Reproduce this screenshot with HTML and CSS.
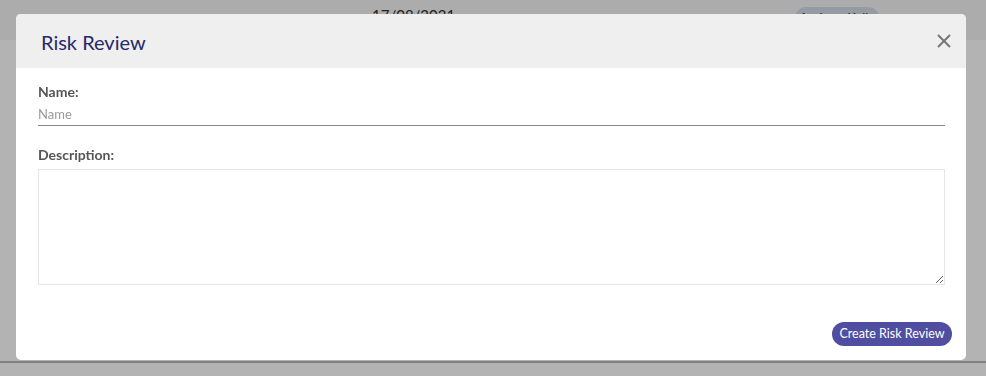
FILE: index.html
```html
<!DOCTYPE html>
<html lang="en">

<head>
    <meta charset="UTF-8">
    <meta name="viewport" content="width=device-width, initial-scale=1.0">
    <title>Risk Review</title>
    <link rel="stylesheet" href="styles.css">
</head>

<body>

    <div class="page">
        <div class="page-header">
            <span class="page-date">17/08/2021</span>
            <span class="user-pill">Andrew Kelly</span>
        </div>
        <div class="page-content"></div>
        <div class="page-footer"></div>
    </div>

    <div class="overlay">
        <div class="modal">
            <div class="modal-header">
                <h2 class="modal-title">Risk Review</h2>
                <span class="close-button">
                    <svg width="14" height="14" viewBox="0 0 14 14">
                        <path d="M1 1 L13 13 M13 1 L1 13" stroke="#777" stroke-width="2" fill="none" />
                    </svg>
                </span>
            </div>
            <div class="modal-body">
                <label class="field-label" for="name">Name:</label>
                <input class="text-input" id="name" type="text" placeholder="Name">
                <label class="field-label description-label" for="description">Description:</label>
                <textarea class="text-area" id="description"></textarea>
            </div>
            <div class="modal-footer">
                <div class="button">Create Risk Review</div>
            </div>
        </div>
    </div>

</body>

</html>
```

FILE: styles.css
```css
body {
    margin: 0;
    font-family: Lato, 'Liberation Sans', Arial, sans-serif;
    background-color: #b3b3b3;
}

.page {
    height: 376px;
    display: flex;
    flex-direction: column;
}

.page-header {
    height: 40px;
    background-color: #acacac;
    display: flex;
    align-items: flex-start;
    padding-top: 6px;
    box-sizing: border-box;
}

.page-date {
    margin-left: 372px;
    font-size: 15px;
    color: #222;
}

.user-pill {
    margin-left: 340px;
    width: 84px;
    height: 22px;
    border-radius: 11px;
    background-color: #949ba3;
    color: #222;
    font-size: 13px;
    text-align: center;
    line-height: 22px;
    margin-top: 1px;
}

.page-content {
    height: 321px;
}

.page-footer {
    height: 2px;
    background-color: #818181;
}

.overlay {
    position: fixed;
    top: 0;
    left: 0;
    right: 0;
    bottom: 0;
    padding: 14px 20px 0 16px;
}

.modal {
    width: 950px;
    height: 346px;
    background-color: white;
    border-radius: 5px;
    overflow: hidden;
    display: flex;
    flex-direction: column;
}

.modal-header {
    height: 54px;
    background-color: #efefef;
    display: flex;
    align-items: center;
    justify-content: space-between;
    padding: 0 15px 0 25px;
    flex-shrink: 0;
}

.modal-title {
    margin: 0;
    font-size: 20px;
    font-weight: normal;
    color: #28296b;
    padding-top: 1px;
}

.close-button {
    display: flex;
    cursor: pointer;
}

.modal-body {
    padding: 15px 21px 0 22px;
    display: flex;
    flex-direction: column;
}

.field-label {
    font-size: 14px;
    font-weight: bold;
    color: #555;
    line-height: 17px;
}

.description-label {
    margin-top: 20px;
}

.text-input {
    margin-top: 3px;
    border: none;
    border-bottom: 1px solid #888;
    height: 21px;
    padding: 0 0 1px 0;
    font-family: inherit;
    font-size: 13px;
    color: #333;
    outline: none;
}

.text-input::placeholder {
    color: #9a9a9a;
}

.text-area {
    margin-top: 6px;
    height: 116px;
    border: 1px solid #e6e6e6;
    box-sizing: border-box;
    padding: 4px;
    font-family: inherit;
    resize: vertical;
    outline: none;
}

.modal-footer {
    display: flex;
    justify-content: flex-end;
    padding: 37px 14px 0 0;
}

.button {
    cursor: pointer;
    background-color: #4f4ea1;
    color: white;
    font-size: 12.5px;
    height: 24px;
    line-height: 24px;
    width: 120px;
    text-align: center;
    border-radius: 12px;
    user-select: none;
}
```
